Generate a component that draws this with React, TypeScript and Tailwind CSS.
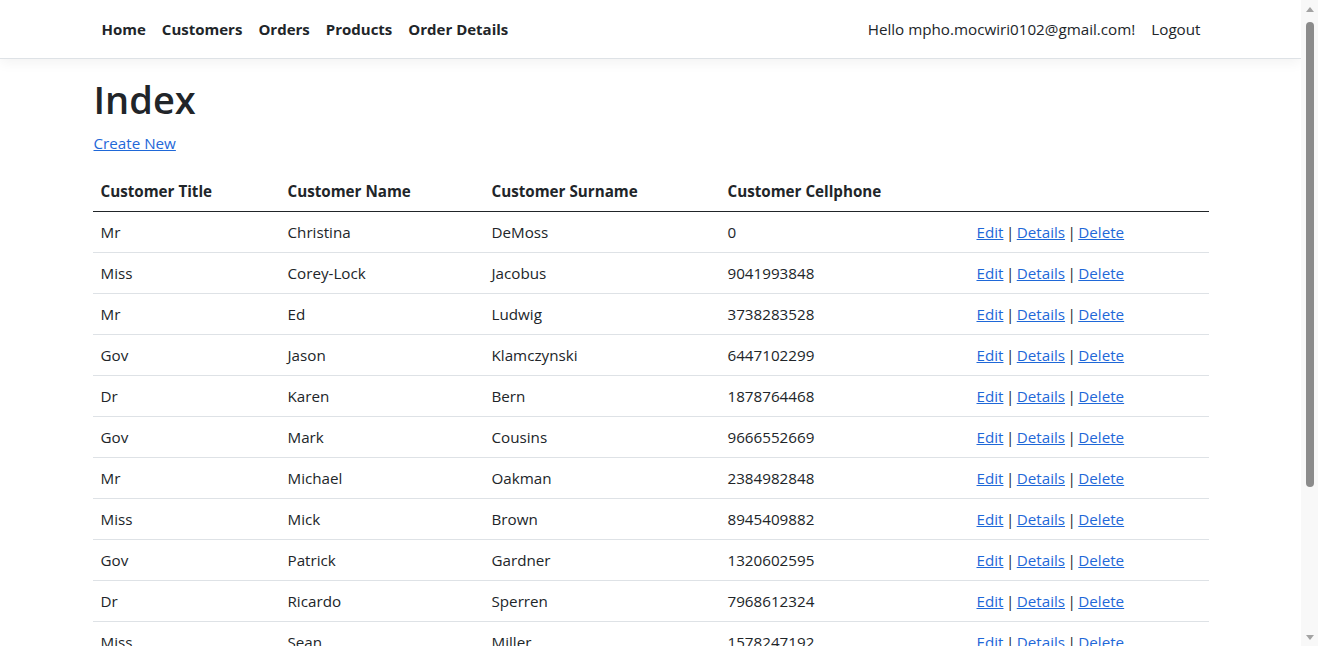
import React from 'react'

const customers = [
  { title: 'Mr', name: 'Christina', surname: 'DeMoss', cell: '0' },
  { title: 'Miss', name: 'Corey-Lock', surname: 'Jacobus', cell: '9041993848' },
  { title: 'Mr', name: 'Ed', surname: 'Ludwig', cell: '3738283528' },
  { title: 'Gov', name: 'Jason', surname: 'Klamczynski', cell: '6447102299' },
  { title: 'Dr', name: 'Karen', surname: 'Bern', cell: '1878764468' },
  { title: 'Gov', name: 'Mark', surname: 'Cousins', cell: '9666552669' },
  { title: 'Mr', name: 'Michael', surname: 'Oakman', cell: '2384982848' },
  { title: 'Miss', name: 'Mick', surname: 'Brown', cell: '8945409882' },
  { title: 'Gov', name: 'Patrick', surname: 'Gardner', cell: '1320602595' },
  { title: 'Dr', name: 'Ricardo', surname: 'Sperren', cell: '7968612324' },
  { title: 'Miss', name: 'Sean', surname: 'Miller', cell: '1578247192' },
]

const navLinks = ['Home', 'Customers', 'Orders', 'Products', 'Order Details']

function Scrollbar() {
  return (
    <div className="w-[17px] shrink-0 bg-[#f8f8f8] flex flex-col items-center">
      <div className="h-[18px] flex items-center justify-center">
        <div className="w-0 h-0 border-l-[4px] border-r-[4px] border-b-[5px] border-l-transparent border-r-transparent border-b-[#a3a3a3]" />
      </div>
      <div className="w-[8px] h-[465px] mt-[4px] rounded-full bg-[#8b8b8b]" />
      <div className="flex-1" />
      <div className="h-[18px] flex items-center justify-center">
        <div className="w-0 h-0 border-l-[4px] border-r-[4px] border-t-[5px] border-l-transparent border-r-transparent border-t-[#a3a3a3]" />
      </div>
    </div>
  )
}

export default function App() {
  return (
    <div
      className="flex h-[646px] w-[1318px] overflow-hidden bg-white text-[#212529] text-[15.2px] leading-6"
      style={{ fontFamily: '"Open Sans", "Noto Sans", sans-serif' }}
    >
      <div className="w-[1301px] shrink-0 overflow-hidden">
        <header className="h-[59px] bg-white border-b border-[#dee2e6] shadow-[0_4px_12px_rgba(0,0,0,0.05)] mb-4">
          <nav className="w-[1140px] mx-auto px-3 h-full flex items-center justify-between">
            <ul className="flex items-center pl-[1px]">
              {navLinks.map((l) => (
                <li key={l}>
                  <a className="px-2 font-bold text-[15px] text-[#212529]">{l}</a>
                </li>
              ))}
            </ul>
            <ul className="flex items-center">
              <li className="px-2">Hello mpho.mocwiri0102@gmail.com!</li>
              <li>
                <a className="px-2 text-[#212529]">Logout</a>
              </li>
            </ul>
          </nav>
        </header>

        <main className="w-[1140px] mx-auto px-3 pb-3">
          <h1 className="text-[38px] leading-[48px] font-semibold mb-2 pl-[1px]">Index</h1>
          <p className="mb-4 pl-[1px]">
            <a className="text-[#1f68d8] underline">Create New</a>
          </p>
          <table className="w-full table-fixed border-collapse">
            <colgroup>
              <col className="w-[187px]" />
              <col className="w-[204px]" />
              <col className="w-[236px]" />
              <col className="w-[249px]" />
              <col />
            </colgroup>
            <thead>
              <tr className="border-b border-[#212529]">
                <th className="p-2 text-left font-bold">Customer Title</th>
                <th className="p-2 text-left font-bold">Customer Name</th>
                <th className="p-2 text-left font-bold">Customer Surname</th>
                <th className="p-2 text-left font-bold">Customer Cellphone</th>
                <th className="p-2" />
              </tr>
            </thead>
            <tbody>
              {customers.map((c, i) => (
                <tr key={i} className="border-b border-[#dee2e6]">
                  <td className="p-2">{c.title}</td>
                  <td className="p-2">{c.name}</td>
                  <td className="p-2">{c.surname}</td>
                  <td className="p-2">{c.cell}</td>
                  <td className="p-2 [word-spacing:-1.5px]">
                    <a className="text-[#1f68d8] underline">Edit</a> |{' '}
                    <a className="text-[#1f68d8] underline">Details</a> |{' '}
                    <a className="text-[#1f68d8] underline">Delete</a>
                  </td>
                </tr>
              ))}
            </tbody>
          </table>
        </main>
      </div>
      <Scrollbar />
    </div>
  )
}
